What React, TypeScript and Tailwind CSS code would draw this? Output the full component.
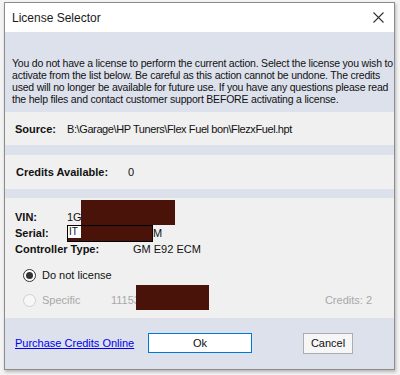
const font = { fontFamily: '"Liberation Sans", Arial, sans-serif' };

// Redacted block, the dark brown boxes over private numbers
const Redact = ({ className }: { className: string }) => (
  <div className={`absolute bg-[#4a1309] ${className}`} />
);

const Radio = ({ checked, disabled }: { checked?: boolean; disabled?: boolean }) => (
  <span
    className={`flex h-[13px] w-[13px] items-center justify-center rounded-full border ${
      disabled ? "border-[#d0d0d0] bg-[#f7f7f7]" : "border-[#333] bg-white"
    }`}
  >
    {checked && <span className="h-[7px] w-[7px] rounded-full bg-[#333]" />}
  </span>
);

export default function App() {
  return (
    <div
      className="h-[375px] w-[400px] bg-[#f3f3f3] pl-[4px] pt-[2px] text-[11px] text-[#111]"
      style={font}
    >
      <div className="flex h-[368px] w-[391px] flex-col border border-[#8c8c8c] shadow-[1px_2px_3px_rgba(0,0,0,0.25)]">
        {/* title bar */}
        <div className="flex h-[29px] items-center justify-between bg-white pl-[7px] pr-[10px]">
          <span className="text-[12px] text-[#1a1a1a]">License Selector</span>
          <svg width="11" height="11" viewBox="0 0 11 11" stroke="#333" strokeWidth="1.1">
            <path d="M0.5 0.5 L10.5 10.5 M10.5 0.5 L0.5 10.5" />
          </svg>
        </div>

        <div className="flex flex-1 flex-col bg-[#dde1ec]">
          <p className="h-[80px] whitespace-nowrap pl-[7px] pt-[25px] text-[10.5px] leading-[12px] tracking-[-0.2px]">
            You do not have a license to perform the current action. Select the license you wish to
            <br />
            activate from the list below. Be careful as this action cannot be undone. The credits
            <br />
            used will no longer be available for future use. If you have any questions please read
            <br />
            the help files and contact customer support BEFORE activating a license.
          </p>

          <div className="flex h-[33px] items-center bg-[#f0f0f0] pl-[10px] pt-[2px]">
            <span className="w-[52px] font-bold">Source:</span>
            <span className="tracking-[-0.4px]">B:\Garage\HP Tuners\Flex Fuel bon\FlezxFuel.hpt</span>
          </div>

          <div className="h-[10px]" />

          <div className="flex h-[34px] items-center bg-[#f0f0f0] pl-[11px] pt-[1px]">
            <span className="w-[112px] font-bold">Credits Available:</span>
            <span>0</span>
          </div>

          <div className="h-[9px]" />

          <div className="relative flex h-[120px] flex-col bg-[#f0f0f0] pl-[10px] pt-[12px]">
            <div className="flex h-[15px] items-center">
              <span className="w-[52px] font-bold">VIN:</span>
              <span>1G</span>
            </div>
            <div className="flex h-[16px] items-center">
              <span className="w-[52px] font-bold">Serial:</span>
              <span className="w-[86px]" />
              <span>M</span>
            </div>
            <div className="flex h-[16px] items-center">
              <span className="w-[118px] font-bold">Controller Type:</span>
              <span>GM E92 ECM</span>
            </div>

            <div className="mt-[11px] flex h-[14px] items-center gap-[6px] pl-[8px]">
              <Radio checked />
              <span>Do not license</span>
            </div>
            <div className="mt-[11px] flex h-[14px] items-center pl-[8px] pr-[22px] text-[#a8a8a8]">
              <Radio disabled />
              <span className="ml-[6px] w-[69px]">Specific</span>
              <span className="flex-1">11153</span>
              <span>Credits: 2</span>
            </div>

            <Redact className="left-[76px] top-[2px] h-[25px] w-[94px]" />
            <div className="absolute left-[62px] top-[27px] h-[17px] w-[86px] border border-black bg-[#4a1309]">
              <div className="h-[12px] w-[13px] bg-white pl-[1px] text-[10px] leading-[12px]">IT</div>
            </div>
            <Redact className="left-[131px] top-[87px] h-[25px] w-[73px]" />
          </div>

          <div className="flex h-[50px] items-center pl-[10px]">
            <a className="w-[133px] text-[#0000ee] underline">Purchase Credits Online</a>
            <button className="h-[20px] w-[104px] border border-[#0078d7] bg-white text-[11px]">Ok</button>
            <button className="ml-[51px] h-[21px] w-[50px] border border-[#adadad] bg-[#f6f6f6] text-[11px]">
              Cancel
            </button>
          </div>
        </div>
      </div>
    </div>
  );
}
